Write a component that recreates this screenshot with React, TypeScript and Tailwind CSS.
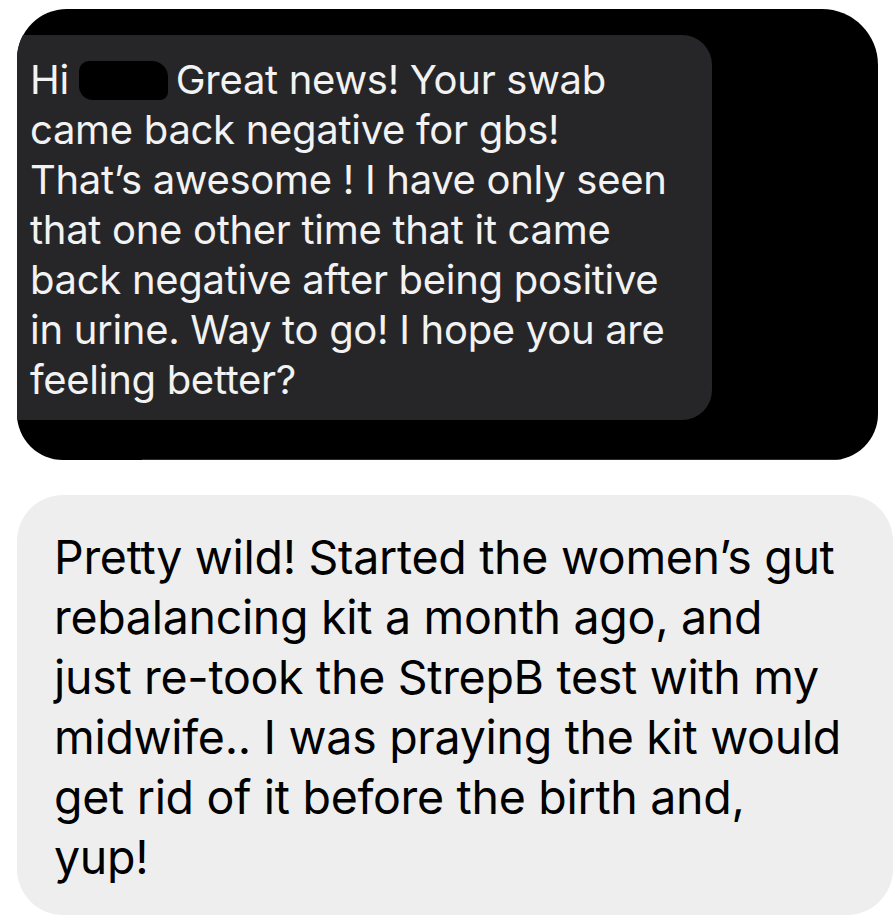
import React from "react"

const firstLines: React.ReactNode[] = [
  <>
    Hi
    <span className="inline-block align-middle ml-[10px] mr-[8px] w-[89px] h-[39px] -mt-[6px] bg-black rounded-[10px_16px_8px_14px]" />
    Great news! Your swab
  </>,
  "came back negative for gbs!",
  "That\u2019s awesome ! I have only seen",
  "that one other time that it came",
  "back negative after being positive",
  "in urine. Way to go! I hope you are",
  "feeling better?",
]

const secondLines = [
  "Pretty wild! Started the women\u2019s gut",
  "rebalancing kit a month ago, and",
  "just re-took the StrepB test with my",
  "midwife.. I was praying the kit would",
  "get rid of it before the birth and,",
  "yup!",
]

export default function App() {
  return (
    <div className="w-[895px] h-[924px] bg-white pt-[9px] font-['Inter','Liberation_Sans',sans-serif]">
      {/* screenshot of the received message */}
      <div className="ml-[17px] w-[861px] h-[451px] bg-black rounded-[50px_56px_46px_46px] overflow-hidden flex flex-col">
        <div className="mt-[26px] w-[695px] h-[385px] bg-[#262629] rounded-tr-[30px] rounded-br-[30px] pt-[20px] pl-[13px] text-[#f2f2f2] text-[40px] leading-[50px] tracking-[-0.3px]">
          {firstLines.map((l, i) => (
            <div key={i} className="whitespace-nowrap">
              {l}
            </div>
          ))}
        </div>
        <div className="flex-1" />
        <div className="ml-[125px] mr-[20px] h-px bg-[#2c2c2e]" />
      </div>

      {/* reply */}
      <div className="mt-[35px] ml-[17px] w-[876px] h-[420px] bg-[#eeeeee] rounded-[46px] pt-[32px] pl-[37px] text-black text-[46.5px] leading-[60px] tracking-[-0.3px]">
        {secondLines.map((l, i) => (
          <div key={i} className="whitespace-nowrap">
            {l}
          </div>
        ))}
      </div>
    </div>
  )
}
